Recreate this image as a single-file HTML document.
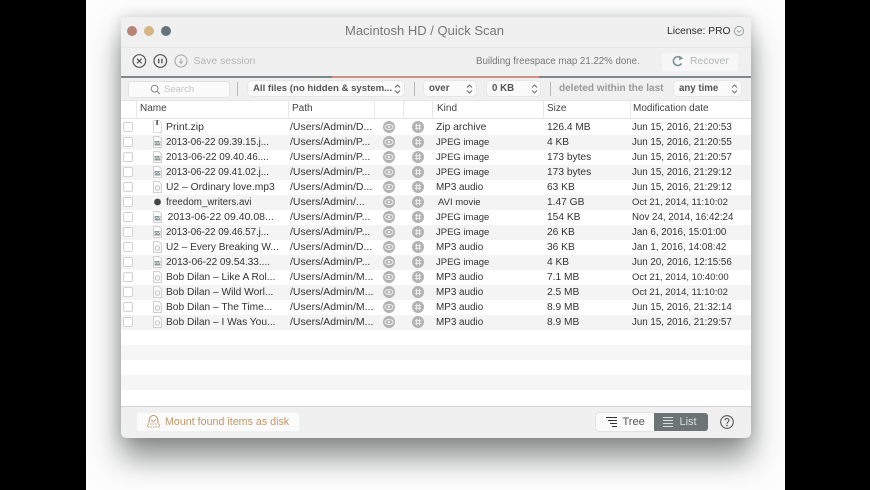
<!DOCTYPE html>
<html><head><meta charset="utf-8">
<style>
html,body{margin:0;padding:0;width:870px;height:490px;overflow:hidden;background:#000}
body{position:relative;filter:blur(.35px)}
*{box-sizing:border-box}
#page{position:absolute;left:86px;top:0;width:699px;height:490px;background:#fdfdfd}
#win{position:absolute;left:121px;top:17px;width:630px;height:421px;border-radius:5px;background:#f0f0f0;box-shadow:0 20px 30px rgba(40,45,45,.52),0 0 14px rgba(40,45,45,.2);overflow:hidden}
.t{position:absolute;font-family:"Liberation Sans",sans-serif;font-size:10.5px;color:#333;white-space:nowrap;line-height:15px;height:15px}
.r{position:absolute;left:121px;width:630px;height:15px}
.b{font-weight:bold}
.pop{position:absolute;background:#fafafa;border-radius:3px;box-shadow:0 0 1px rgba(0,0,0,.25);height:15px}
.cb{position:absolute;left:123px;width:10px;height:10px;border:1px solid #d2d2d2;border-radius:2px;background:#fff}
.sep{position:absolute;width:1px;background:#e8e8e8}
.fs{position:absolute;width:1px;background:#b8b8b8;top:82px;height:14px}
.p{left:290px}.k{left:436px}.s{left:547px;font-size:10.2px}.d{left:632px;font-size:9.75px}
.j{font-size:9.5px}.m{font-size:9.9px}
.n1{font-size:9.7px}.n2{font-size:10.2px}
svg{position:absolute;overflow:visible}
</style></head><body>
<div id="page"></div>
<div id="win"></div>

<!-- title bar -->
<div style="position:absolute;left:121px;top:47px;width:630px;height:1px;background:#e6e6e6"></div>
<div style="position:absolute;left:127px;top:26px;width:10px;height:10px;border-radius:50%;background:#b98478"></div>
<div style="position:absolute;left:144px;top:26px;width:10px;height:10px;border-radius:50%;background:#d6b583"></div>
<div style="position:absolute;left:161px;top:26px;width:10px;height:10px;border-radius:50%;background:#64757a"></div>
<div class="t" style="left:345px;top:23px;font-size:13px;color:#777;line-height:16px;height:16px">Macintosh HD / Quick Scan</div>
<div class="t" style="left:667px;top:24px;font-size:10.3px;color:#2c2c2c">License: PRO</div>
<svg style="left:733px;top:25px" width="12" height="12" viewBox="0 0 12 12"><circle cx="6" cy="6" r="4.6" fill="none" stroke="#9aa5a0"/><path d="M3.8 5.2L6 7.3 8.2 5.2" fill="none" stroke="#9aa5a0"/></svg>

<!-- toolbar -->
<svg style="left:132px;top:54px" width="16" height="16" viewBox="0 0 16 16"><circle cx="7.3" cy="7" r="6.300" fill="none" stroke="#555" stroke-width="1.2"/><path d="M5 4.700l4.600 4.600M9.600 4.700L5 9.300" stroke="#555" stroke-width="1.2"/></svg>
<svg style="left:153px;top:54px" width="16" height="16" viewBox="0 0 16 16"><circle cx="7.300" cy="7" r="6.300" fill="none" stroke="#555" stroke-width="1.2"/><path d="M5.700 4.800v4.400M8.900 4.800v4.400" stroke="#555" stroke-width="1.4"/></svg>
<svg style="left:174px;top:54px" width="16" height="16" viewBox="0 0 16 16"><circle cx="7" cy="7" r="6" fill="none" stroke="#aaa" stroke-width="1.1"/><path d="M7 4.200v5M5.200 7.500l1.800 1.800 1.800-1.800" fill="none" stroke="#aaa"/></svg>
<div class="t" style="left:193.5px;top:54px;color:#b5b5b5;font-size:10.4px">Save session</div>
<div class="t" style="left:476px;top:54px;color:#777;font-size:9.7px">Building freespace map 21.22% done.</div>
<div style="position:absolute;left:662px;top:53px;width:76px;height:18px;background:#f7f7f7;border-radius:2px"></div>
<svg style="left:671px;top:54px" width="14" height="14" viewBox="0 0 14 14"><path d="M10.500 9.500A4.400 4.400 0 1 1 9.500 3.600" fill="none" stroke="#7d9396" stroke-width="1.6"/><path d="M8.200 1.600l4 2.600-4 2.200z" fill="#7d9396"/></svg>
<div class="t" style="left:690px;top:54px;color:#b0b8b8;font-size:10.4px">Recover</div>

<!-- progress -->
<div style="position:absolute;left:121px;top:76px;width:630px;height:1.5px;background:#7a8786"></div>
<div style="position:absolute;left:332px;top:76px;width:207px;height:1.5px;background:#d29080"></div>

<!-- filter bar -->
<div style="position:absolute;left:129px;top:82px;width:100px;height:15px;background:#fbfbfb;border-radius:2px;box-shadow:0 0 1px rgba(0,0,0,.35)"></div>
<svg style="left:150px;top:84px" width="11" height="11" viewBox="0 0 11 11"><circle cx="4.600" cy="4.600" r="3.400" fill="none" stroke="#888"/><path d="M7 7l3 3" stroke="#888"/></svg>
<div class="t" style="left:164px;top:82px;color:#c4c4c4;font-size:9.5px">Search</div>
<div class="fs" style="left:237px"></div>
<div class="pop" style="left:248px;top:81px;width:156px"></div>
<div class="t b" style="left:253px;top:81px;color:#555;font-size:9.6px">All files (no hidden &amp; system...</div>
<div class="fs" style="left:414px"></div>
<div class="pop" style="left:424px;top:81px;width:52px"></div>
<div class="t b" style="left:429px;top:81px;color:#555;font-size:9.7px">over</div>
<div class="pop" style="left:487px;top:81px;width:53px"></div>
<div class="t b" style="left:492px;top:81px;color:#555;font-size:9.7px">0 KB</div>
<div class="fs" style="left:550px"></div>
<div class="t b" style="left:559px;top:81px;color:#999;font-size:10px">deleted within the last</div>
<div class="pop" style="left:674px;top:81px;width:67px"></div>
<div class="t b" style="left:679px;top:81px;color:#555;font-size:9.7px">any time</div>
<svg style="left:394px;top:84px" width="7" height="10" viewBox="0 0 7 10"><path d="M1 3.500L3.500 1 6 3.500M1 6.500L3.500 9 6 6.500" fill="none" stroke="#666" stroke-width=".9"/></svg>
<svg style="left:466px;top:84px" width="7" height="10" viewBox="0 0 7 10"><path d="M1 3.500L3.500 1 6 3.500M1 6.500L3.500 9 6 6.500" fill="none" stroke="#666" stroke-width=".9"/></svg>
<svg style="left:531px;top:84px" width="7" height="10" viewBox="0 0 7 10"><path d="M1 3.500L3.500 1 6 3.500M1 6.500L3.500 9 6 6.500" fill="none" stroke="#666" stroke-width=".9"/></svg>
<svg style="left:731px;top:84px" width="7" height="10" viewBox="0 0 7 10"><path d="M1 3.500L3.500 1 6 3.500M1 6.500L3.500 9 6 6.500" fill="none" stroke="#666" stroke-width=".9"/></svg>

<!-- table bg -->
<div style="position:absolute;left:121px;top:100px;width:630px;height:306px;background:#fff"></div>
<div style="position:absolute;left:121px;top:100px;width:630px;height:1px;background:#e6e6e6"></div>
<div style="position:absolute;left:121px;top:118px;width:630px;height:1px;background:#e6e6e6"></div>
<div class="sep" style="left:136px;top:101px;height:17px"></div>
<div class="sep" style="left:288px;top:101px;height:17px"></div>
<div class="sep" style="left:374px;top:101px;height:17px"></div>
<div class="sep" style="left:403px;top:101px;height:17px"></div>
<div class="sep" style="left:432px;top:101px;height:17px"></div>
<div class="sep" style="left:543px;top:101px;height:17px"></div>
<div class="sep" style="left:630px;top:101px;height:17px"></div>
<div class="t" style="left:140px;top:101px;font-size:10px;color:#444">Name</div>
<div class="t" style="left:292px;top:101px;font-size:10px;color:#444">Path</div>
<div class="t" style="left:437px;top:101px;font-size:10px;color:#444">Kind</div>
<div class="t" style="left:547px;top:101px;font-size:10px;color:#444">Size</div>
<div class="t" style="left:633px;top:101px;font-size:10px;color:#444">Modification date</div>

<!-- stripes -->
<div class="r" style="top:134.500px;background:#f4f4f4"></div>
<div class="r" style="top:164.500px;background:#f4f4f4"></div>
<div class="r" style="top:194.500px;background:#f4f4f4"></div>
<div class="r" style="top:224.500px;background:#f4f4f4"></div>
<div class="r" style="top:254.500px;background:#f4f4f4"></div>
<div class="r" style="top:284.500px;background:#f4f4f4"></div>
<div class="r" style="top:314.500px;background:#f4f4f4"></div>
<div class="r" style="top:345px;background:#f6f6f6"></div>
<div class="r" style="top:375px;background:#f6f6f6"></div>

<svg style="left:0;top:0" width="870" height="490">
<defs>
<g id="eye"><circle cx="0" cy="0" r="6" fill="#b2b2b2"/><ellipse cx="0" cy="0" rx="4" ry="2.500" fill="none" stroke="#f2f2f2"/><circle cx="0" cy="0" r="1.200" fill="#f2f2f2"/></g>
<g id="hash"><circle cx="0" cy="0" r="6" fill="#b2b2b2"/><path d="M-1.400-3.200v6.400M1.400-3.200v6.400M-3.200-1.300h6.400M-3.200 1.300h6.400" stroke="#f2f2f2" stroke-width=".9"/></g>
<g id="doc"><path d="M-4-5.500H1.500L4-3V5.500H-4Z" fill="#fbfbfb" stroke="#c4c4c4" stroke-width=".8"/></g>
<g id="img"><use href="#doc"/><rect x="-3" y="-1" width="6" height="4.500" fill="#8d989a"/><path d="M-3 2L-1 .3 1 2 2-.5 3 2" fill="none" stroke="#e4e8e8" stroke-width=".6"/></g>
<g id="mp3"><use href="#doc"/><circle cx="0" cy="1" r="2.200" fill="none" stroke="#bbb" stroke-width=".9"/></g>
</defs>
<use href="#eye" x="389" y="127"/><use href="#hash" x="418" y="127"/>
<use href="#eye" x="389" y="142"/><use href="#hash" x="418" y="142"/>
<use href="#eye" x="389" y="157"/><use href="#hash" x="418" y="157"/>
<use href="#eye" x="389" y="172"/><use href="#hash" x="418" y="172"/>
<use href="#eye" x="389" y="187"/><use href="#hash" x="418" y="187"/>
<use href="#eye" x="389" y="202"/><use href="#hash" x="418" y="202"/>
<use href="#eye" x="389" y="217"/><use href="#hash" x="418" y="217"/>
<use href="#eye" x="389" y="232"/><use href="#hash" x="418" y="232"/>
<use href="#eye" x="389" y="247"/><use href="#hash" x="418" y="247"/>
<use href="#eye" x="389" y="262"/><use href="#hash" x="418" y="262"/>
<use href="#eye" x="389" y="277"/><use href="#hash" x="418" y="277"/>
<use href="#eye" x="389" y="292"/><use href="#hash" x="418" y="292"/>
<use href="#eye" x="389" y="307"/><use href="#hash" x="418" y="307"/>
<use href="#eye" x="389" y="322"/><use href="#hash" x="418" y="322"/>
<path d="M153.500 120.500H159.500L161.500 123V132.500H153.500Z" fill="#fff" stroke="#d0d0d0" stroke-width=".8"/><rect x="156.300" y="120" width="1.600" height="5" fill="#555"/>
<use href="#img" x="157.500" y="142"/><use href="#img" x="157.500" y="157"/><use href="#img" x="157.500" y="172"/>
<use href="#mp3" x="157.500" y="187"/>
<circle cx="157.500" cy="202" r="3.400" fill="#444"/>
<use href="#img" x="157.500" y="217"/><use href="#img" x="157.500" y="232"/>
<use href="#mp3" x="157.500" y="247"/>
<use href="#img" x="157.500" y="262"/>
<use href="#mp3" x="157.500" y="277"/><use href="#mp3" x="157.500" y="292"/><use href="#mp3" x="157.500" y="307"/><use href="#mp3" x="157.500" y="322"/>
</svg>

<div class="cb" style="top:122px"></div><div class="cb" style="top:137px"></div><div class="cb" style="top:152px"></div><div class="cb" style="top:167px"></div><div class="cb" style="top:182px"></div><div class="cb" style="top:197px"></div><div class="cb" style="top:212px"></div><div class="cb" style="top:227px"></div><div class="cb" style="top:242px"></div><div class="cb" style="top:257px"></div><div class="cb" style="top:272px"></div><div class="cb" style="top:287px"></div><div class="cb" style="top:302px"></div><div class="cb" style="top:317px"></div>

<!-- rows -->
<div class="t" style="left:166px;top:120px">Print.zip</div><div class="t p" style="top:120px">/Users/Admin/D...</div><div class="t k" style="top:120px;font-size:10.3px">Zip archive</div><div class="t s" style="top:120px">126.4 MB</div><div class="t d" style="top:120px">Jun 15, 2016, 21:20:53</div>
<div class="t n1" style="left:166px;top:135px">2013-06-22 09.39.15.j...</div><div class="t p" style="top:135px">/Users/Admin/P...</div><div class="t k j" style="top:135px">JPEG image</div><div class="t s" style="top:135px">4 KB</div><div class="t d" style="top:135px">Jun 15, 2016, 21:20:55</div>
<div class="t" style="left:166px;top:150px;font-size:9.9px">2013-06-22 09.40.46....</div><div class="t p" style="top:150px">/Users/Admin/P...</div><div class="t k j" style="top:150px">JPEG image</div><div class="t s" style="top:150px">173 bytes</div><div class="t d" style="top:150px">Jun 15, 2016, 21:20:57</div>
<div class="t n1" style="left:166px;top:165px">2013-06-22 09.41.02.j...</div><div class="t p" style="top:165px">/Users/Admin/P...</div><div class="t k j" style="top:165px">JPEG image</div><div class="t s" style="top:165px">173 bytes</div><div class="t d" style="top:165px">Jun 15, 2016, 21:29:12</div>
<div class="t" style="left:166px;top:180px;font-size:10.3px">U2 – Ordinary love.mp3</div><div class="t p" style="top:180px">/Users/Admin/D...</div><div class="t k m" style="top:180px">MP3 audio</div><div class="t s" style="top:180px">63 KB</div><div class="t d" style="top:180px">Jun 15, 2016, 21:29:12</div>
<div class="t" style="left:166px;top:195px;font-size:9.8px">freedom_writers.avi</div><div class="t p" style="top:195px">/Users/Admin/...</div><div class="t" style="left:438px;top:195px;font-size:9.5px">AVI movie</div><div class="t s" style="top:195px">1.47 GB</div><div class="t d" style="top:195px;font-size:9.5px">Oct 21, 2014, 11:10:02</div>
<div class="t" style="left:167.500px;top:210px">2013-06-22 09.40.08...</div><div class="t p" style="top:210px">/Users/Admin/P...</div><div class="t k j" style="top:210px">JPEG image</div><div class="t s" style="top:210px">154 KB</div><div class="t d" style="top:210px">Nov 24, 2014, 16:42:24</div>
<div class="t n1" style="left:166px;top:225px">2013-06-22 09.46.57.j...</div><div class="t p" style="top:225px">/Users/Admin/P...</div><div class="t k j" style="top:225px">JPEG image</div><div class="t s" style="top:225px">26 KB</div><div class="t d" style="top:225px">Jan 6, 2016, 15:01:00</div>
<div class="t" style="left:166px;top:240px;font-size:10.1px">U2 – Every Breaking W...</div><div class="t p" style="top:240px">/Users/Admin/D...</div><div class="t k m" style="top:240px">MP3 audio</div><div class="t s" style="top:240px">36 KB</div><div class="t d" style="top:240px">Jan 1, 2016, 14:08:42</div>
<div class="t" style="left:166px;top:255px;font-size:10px">2013-06-22 09.54.33....</div><div class="t p" style="top:255px">/Users/Admin/P...</div><div class="t k j" style="top:255px">JPEG image</div><div class="t s" style="top:255px">4 KB</div><div class="t d" style="top:255px">Jun 20, 2016, 12:15:56</div>
<div class="t n2" style="left:166px;top:270px">Bob Dilan – Like A Rol...</div><div class="t p" style="top:270px">/Users/Admin/M...</div><div class="t k m" style="top:270px">MP3 audio</div><div class="t s" style="top:270px">7.1 MB</div><div class="t d" style="top:270px;font-size:9.5px">Oct 21, 2014, 10:40:00</div>
<div class="t n2" style="left:166px;top:285px">Bob Dilan – Wild Worl...</div><div class="t p" style="top:285px">/Users/Admin/M...</div><div class="t k m" style="top:285px">MP3 audio</div><div class="t s" style="top:285px">2.5 MB</div><div class="t d" style="top:285px;font-size:9.5px">Oct 21, 2014, 11:10:02</div>
<div class="t n2" style="left:166px;top:300px">Bob Dilan – The Time...</div><div class="t p" style="top:300px">/Users/Admin/M...</div><div class="t k m" style="top:300px">MP3 audio</div><div class="t s" style="top:300px">8.9 MB</div><div class="t d" style="top:300px">Jun 15, 2016, 21:32:14</div>
<div class="t n2" style="left:166px;top:315px">Bob Dilan – I Was You...</div><div class="t p" style="top:315px">/Users/Admin/M...</div><div class="t k m" style="top:315px">MP3 audio</div><div class="t s" style="top:315px">8.9 MB</div><div class="t d" style="top:315px">Jun 15, 2016, 21:29:57</div>

<!-- footer -->
<div style="position:absolute;left:121px;top:406px;width:630px;height:1px;background:#d4d4d4"></div>
<div style="position:absolute;left:137px;top:413px;width:162px;height:18px;background:#fbfbfb;border-radius:2px"></div>
<svg style="left:146px;top:414px" width="15" height="15" viewBox="0 0 15 15"><path d="M3 9C3 4.500 4.500 1.500 7.500 1.500S12 4.500 12 9" fill="none" stroke="#c39a66" stroke-width="1.100"/><path d="M1.500 10H13.500V13H1.500Z" fill="none" stroke="#c39a66" stroke-width="1" stroke-dasharray="1.500 1"/><path d="M5 6l2 1.500 3-2" fill="none" stroke="#c39a66"/></svg>
<div class="t" style="left:165px;top:415px;color:#c09866;font-size:10.7px">Mount found items as disk</div>
<div style="position:absolute;left:596px;top:413px;width:58px;height:18px;background:#fafafa;border-radius:3px 0 0 3px;box-shadow:0 0 1px rgba(0,0,0,.35)"></div>
<div style="position:absolute;left:654px;top:413px;width:54px;height:18px;background:#6c7475;border-radius:0 3px 3px 0"></div>
<svg style="left:605px;top:416px" width="14" height="12" viewBox="0 0 14 12"><path d="M1 1.500H12M3 4.500H12M5 7.500H12M7 10.500H12" stroke="#333" stroke-width="1.100"/></svg>
<svg style="left:662px;top:416px" width="14" height="12" viewBox="0 0 14 12"><path d="M1 1.500H11M1 4.500H11M1 7.500H11M1 10.500H11" stroke="#d8dcdc" stroke-width="1.100"/></svg>
<div class="t" style="left:622.500px;top:415px;color:#555;font-size:11px">Tree</div>
<div class="t" style="left:679.500px;top:415px;color:#d8dcdc;font-size:11px">List</div>
<svg style="left:720px;top:415px" width="14" height="14" viewBox="0 0 14 14"><circle cx="7" cy="7" r="6.300" fill="none" stroke="#555" stroke-width="1.100"/><path d="M5 5.400C5 2.900 9 2.900 9 5.300C9 6.900 7 6.900 7 8.700" fill="none" stroke="#555" stroke-width="1.100"/><circle cx="7" cy="10.400" r=".8" fill="#555"/></svg>
</body></html>
